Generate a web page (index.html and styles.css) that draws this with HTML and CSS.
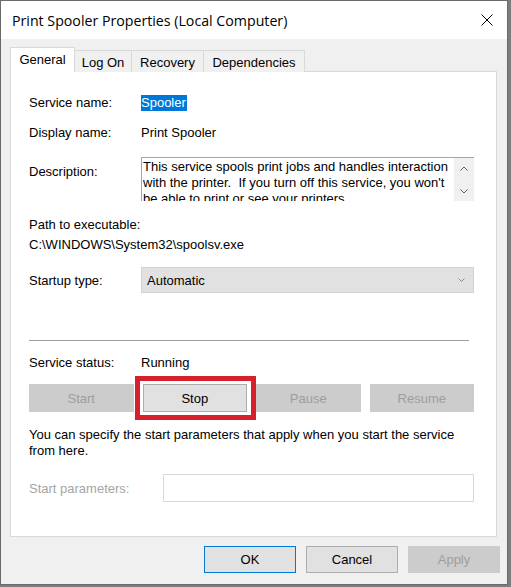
FILE: index.html
```html
<!DOCTYPE html>
<html>
<head>
<meta charset="utf-8">
<title>Print Spooler Properties</title>
<link rel="stylesheet" href="styles.css">
</head>
<body>
<div class="window">
  <div class="titlebar">
    <span class="title">Print Spooler Properties (Local Computer)</span>
    <svg class="close" width="12" height="12" viewBox="0 0 12 12"><path d="M0.5 0.5 L11.5 11.5 M11.5 0.5 L0.5 11.5" stroke="#000" stroke-width="1" fill="none"/></svg>
  </div>
  <div class="body">
    <div class="tabs">
      <div class="tab active t-general">General</div>
      <div class="tab t-logon">Log On</div>
      <div class="tab t-recovery">Recovery</div>
      <div class="tab t-deps">Dependencies</div>
    </div>
    <div class="panel">
      <div class="row">
        <span class="label">Service name:</span>
        <span class="selected">Spooler</span>
      </div>
      <div class="row r-display">
        <span class="label">Display name:</span>
        <span>Print Spooler</span>
      </div>
      <div class="row-desc">
        <span class="label desc-label">Description:</span>
        <div class="desc-box">
          <div class="desc-text">This service spools print jobs and handles interaction with the printer.&nbsp; If you turn off this service, you won't be able to print or see your printers.</div>
          <div class="scrollbar">
            <svg width="8" height="5" viewBox="0 0 8 5"><path d="M0.5 4.5 L4 1 L7.5 4.5" stroke="#606060" fill="none"/></svg>
            <svg width="8" height="5" viewBox="0 0 8 5"><path d="M0.5 0.5 L4 4 L7.5 0.5" stroke="#606060" fill="none"/></svg>
          </div>
        </div>
      </div>
      <div class="path">
        <div class="line">Path to executable:</div>
        <div class="line">C:\WINDOWS\System32\spoolsv.exe</div>
      </div>
      <div class="row-startup">
        <span class="label">Startup type:</span>
        <div class="select">
          <span>Automatic</span>
          <svg width="7" height="4" viewBox="0 0 7 4"><path d="M0.5 0.5 L3.5 3.5 L6.5 0.5" stroke="#8a8a8a" fill="none"/></svg>
        </div>
      </div>
      <div class="separator"></div>
      <div class="row r-status">
        <span class="label">Service status:</span>
        <span>Running</span>
      </div>
      <div class="buttons">
        <div class="btn disabled">Start</div>
        <div class="btn stop">Stop</div>
        <div class="btn disabled">Pause</div>
        <div class="btn disabled">Resume</div>
      </div>
      <p class="hint">You can specify the start parameters that apply when you start the service from here.</p>
      <div class="row-params">
        <span class="label params-label">Start parameters:</span>
        <div class="input"></div>
      </div>
    </div>
    <div class="footer">
      <div class="fbtn ok">OK</div>
      <div class="fbtn">Cancel</div>
      <div class="fbtn disabled">Apply</div>
    </div>
  </div>
</div>
</body>
</html>
```
FILE: styles.css
```css
html, body {
  margin: 0;
  padding: 0;
}
body {
  background: #7d7d7d;
  width: 511px;
  height: 587px;
  overflow: hidden;
  font-family: "Liberation Sans", Arial, sans-serif;
  font-size: 13px;
  color: #000;
}
.window {
  width: 508px;
  height: 585px;
  box-sizing: border-box;
  border: 1px solid #6a6a6a;
  background: #f0f0f0;
  display: flex;
  flex-direction: column;
}
.titlebar {
  height: 38px;
  flex: none;
  background: #fff;
  display: flex;
  align-items: center;
  justify-content: space-between;
  padding: 0 14px 0 11px;
}
.title {
  font-family: "Open Sans", "Noto Sans", sans-serif;
  font-size: 14.2px;
  color: #000;
}
.close {
  display: block;
}
.body {
  flex: 1;
  display: flex;
  flex-direction: column;
  padding: 9px 0 0 9px;
}
.tabs {
  display: flex;
  align-items: flex-end;
  height: 24px;
  margin-bottom: -1px;
  position: relative;
  z-index: 1;
}
.tab {
  height: 22px;
  box-sizing: border-box;
  border: 1px solid #d9d9d9;
  border-left: none;
  border-bottom: none;
  background: #f0f0f0;
  display: flex;
  align-items: center;
  justify-content: center;
  padding-top: 1px;
}
.tab.active {
  height: 25px;
  background: #fff;
  border-left: 1px solid #d9d9d9;
  padding-bottom: 3px;
}
.t-general { width: 65px; }
.t-logon { width: 57px; }
.t-recovery { width: 72px; }
.t-deps { width: 101px; }
.panel {
  width: 487px;
  height: 466px;
  box-sizing: border-box;
  border: 1px solid #d9d9d9;
  background: #fff;
  padding: 21px 0 0 18px;
}
.row {
  display: flex;
  align-items: center;
  height: 20px;
  line-height: 20px;
}
.label {
  width: 112px;
  flex: none;
}
.selected {
  background: #0078d7;
  color: #fff;
  line-height: 16px;
  padding: 0 1px 0 0;
}
.r-display {
  margin-top: 10px;
}
.row-desc {
  display: flex;
  align-items: flex-start;
  margin-top: 14px;
}
.desc-label {
  line-height: 20px;
  padding-top: 5px;
}
.desc-box {
  width: 333px;
  height: 44px;
  box-sizing: border-box;
  border-top: 1px solid #a5a5a5;
  border-left: 1px solid #a5a5a5;
  display: flex;
  overflow: hidden;
}
.desc-text {
  flex: 1;
  padding: 1px 4px 0 1px;
  line-height: 16px;
  overflow: hidden;
}
.scrollbar {
  width: 20px;
  flex: none;
  background: #f0f0f0;
  display: flex;
  flex-direction: column;
  align-items: center;
  justify-content: space-between;
  padding: 8px 0 7px;
  box-sizing: border-box;
}
.scrollbar svg {
  display: block;
}
.path {
  margin-top: 14px;
}
.line {
  line-height: 20px;
}
.row-startup {
  display: flex;
  align-items: center;
  margin-top: 12px;
}
.select {
  width: 333px;
  height: 26px;
  box-sizing: border-box;
  background: #e1e1e1;
  border: 1px solid #d2d2d2;
  display: flex;
  align-items: center;
  justify-content: space-between;
  padding: 0 8px 0 5px;
}
.select svg {
  display: block;
}
.separator {
  margin-top: 47px;
  width: 440px;
  height: 0;
  border-top: 1px solid #a0a0a0;
}
.r-status {
  margin-top: 12px;
}
.buttons {
  display: grid;
  grid-template-columns: repeat(4, 1fr);
  column-gap: 9px;
  width: 445px;
  margin-top: 11px;
}
.btn {
  height: 28px;
  box-sizing: border-box;
  display: flex;
  align-items: center;
  justify-content: center;
  background: #e1e1e1;
  border: 1px solid #adadad;
}
.btn.disabled {
  background: #cccccc;
  border-color: #cccccc;
  color: #9e9e9e;
}
.btn.stop {
  position: relative;
}
.btn.stop::after {
  content: "";
  position: absolute;
  top: -9px;
  left: -9px;
  right: -10px;
  bottom: -9px;
  border: 5px solid #d6202b;
}
.hint {
  margin: 15px 0 0;
  width: 450px;
  line-height: 16px;
}
.row-params {
  display: flex;
  align-items: center;
  margin-top: 15px;
}
.params-label {
  width: 134px;
  color: #a5a5a5;
}
.input {
  width: 311px;
  height: 28px;
  box-sizing: border-box;
  border: 1px solid #d9d9d9;
  background: #fff;
}
.footer {
  display: flex;
  justify-content: flex-end;
  gap: 10px;
  margin-top: 9px;
  padding-right: 7px;
}
.fbtn {
  width: 92px;
  height: 27px;
  box-sizing: border-box;
  display: flex;
  align-items: center;
  justify-content: center;
  background: #e1e1e1;
  border: 1px solid #adadad;
}
.fbtn.ok {
  border-color: #0078d7;
}
.fbtn.disabled {
  background: #cccccc;
  border-color: #cccccc;
  color: #9e9e9e;
}
```
